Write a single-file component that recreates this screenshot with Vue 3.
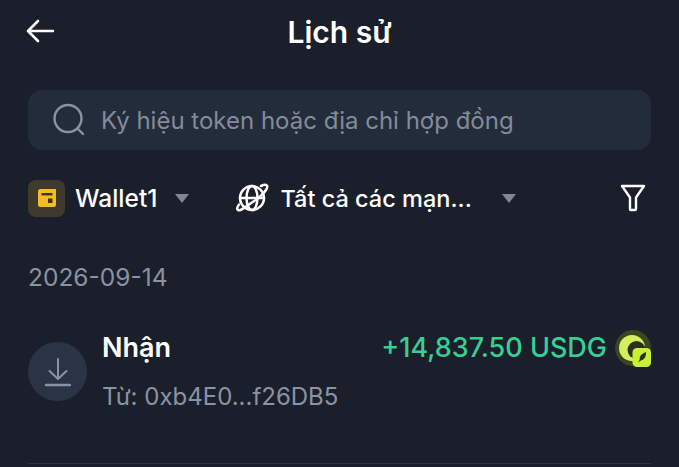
<script setup>
const title = 'Lịch sử'
</script>

<template>
  <div class="page">
    <header class="header">
      <svg class="back" width="30" height="24" viewBox="0 0 30 24" fill="none" stroke="#fff" stroke-width="2.6" stroke-linecap="round" stroke-linejoin="round">
        <path d="M2 12H27M12 2 2 12 12 22" />
      </svg>
      <h1 class="title">{{ title }}</h1>
    </header>

    <div class="search">
      <svg width="34" height="34" viewBox="0 0 34 34" fill="none" stroke="#8b93a3" stroke-width="2.4" stroke-linecap="round">
        <circle cx="16" cy="15.5" r="13.5" />
        <path d="M25.5 25.5 31 31" />
      </svg>
      <span class="placeholder">Ký hiệu token hoặc địa chỉ hợp đồng</span>
    </div>

    <div class="filters">
      <div class="wallet-badge">
        <svg width="20" height="20" viewBox="0 0 20 20">
          <path d="M3.500 1H19v15.500a2.500 2.500 0 0 1-2.500 2.500H3.500A2.500 2.500 0 0 1 1 16.500v-13A2.500 2.500 0 0 1 3.500 1Z" fill="#f5bd24" />
          <rect x="4.500" y="5" width="11" height="2.400" fill="#3f3521" />
          <rect x="11" y="10.500" width="4.500" height="4.500" fill="#3f3521" />
        </svg>
      </div>
      <span class="filter-label wallet-name">Wallet1</span>
      <span class="caret"></span>
      <svg class="globe" width="34" height="34" viewBox="0 0 34 34" fill="none" stroke="#fff" stroke-width="2.500" stroke-linecap="round" stroke-linejoin="round">
        <circle cx="17" cy="17" r="12" />
        <ellipse cx="17" cy="17" rx="5.500" ry="12" />
        <path d="M5 17h24" />
        <path d="M26 5c3-1.400 5.400-1.500 6-.3 1.500 2.800-4.500 9.800-13.500 15.800S4.400 31 2.600 28.800c-.9-1.100-.3-3 1.400-5.300" />
      </svg>
      <span class="filter-label network">Tất cả các mạn...</span>
      <span class="caret"></span>
      <svg class="funnel" width="26" height="28" viewBox="0 0 26 28" fill="none" stroke="#fff" stroke-width="2.400" stroke-linejoin="round">
        <path d="M2 2h22l-8 11.500V25a1 1 0 0 1-1 1h-4a1 1 0 0 1-1-1V13.500Z" />
      </svg>
    </div>

    <div class="date">2026-09-14</div>

    <div class="tx">
      <div class="tx-icon">
        <svg width="26" height="30" viewBox="0 0 26 30" fill="none" stroke="#8b93a3" stroke-width="2" stroke-linecap="round" stroke-linejoin="round">
          <path d="M13 2v20M4.500 14 13 22l8.500-8" />
          <path d="M1 28h24" stroke-width="2.400" />
        </svg>
      </div>
      <div class="tx-main">
        <div class="tx-title">Nhận</div>
        <div class="tx-from">Từ: 0xb4E0...f26DB5</div>
      </div>
      <div class="tx-amount">
        <span>+14,837.50 USDG</span>
        <span class="coin">
          <svg width="36" height="37" viewBox="0 0 36 37">
            <circle cx="18" cy="18" r="18" fill="#3b451f" />
            <circle cx="17" cy="18" r="13" fill="#d5ef5c" />
            <circle cx="21.500" cy="20" r="9" fill="#2a2f20" />
            <rect x="17.500" y="18" width="18.500" height="19" rx="4.500" fill="#c8f22f" />
            <path d="M23 32.500l1.800-3c-.6-3 1.800-6 6.200-7.500.4 4-1.400 7.500-4.800 8.300l-3.200 2.200Z" fill="#283016" />
          </svg>
        </span>
      </div>
    </div>
    <div class="divider"></div>
  </div>
</template>

<style scoped>
.page {
  box-sizing: border-box;
  width: 679px;
  height: 467px;
  overflow: hidden;
  padding: 0 28px;
  background: #1a1f2b;
  color: #fff;
  font-family: Inter, "Noto Sans", sans-serif;
}
.header {
  position: relative;
  display: flex;
  align-items: center;
  justify-content: center;
  height: 64px;
}
.back {
  position: absolute;
  left: -2px;
  top: 19px;
}
.title {
  margin: 0;
  font-size: 30px;
  font-weight: 600;
  line-height: 36px;
}
.search {
  display: flex;
  align-items: center;
  gap: 15px;
  height: 60px;
  margin-top: 26px;
  padding-left: 24px;
  border-radius: 14px;
  background: #232c3a;
}
.placeholder {
  font-size: 24px;
  color: #838b9b;
}
.filters {
  display: flex;
  align-items: center;
  height: 38px;
  margin-top: 29px;
}
.wallet-badge {
  display: flex;
  align-items: center;
  justify-content: center;
  width: 37px;
  height: 37px;
  border-radius: 8px;
  background: #403a2d;
}
.filter-label {
  font-weight: 500;
  color: #fff;
}
.wallet-name {
  margin-left: 10px;
  font-size: 24.500px;
}
.caret {
  width: 0;
  height: 0;
  margin-left: 18px;
  border-left: 7px solid transparent;
  border-right: 7px solid transparent;
  border-top: 9px solid #7f8696;
}
.globe {
  margin-left: 46px;
}
.network {
  margin-left: 11px;
  font-size: 23.500px;
}
.network + .caret {
  margin-left: 30px;
}
.funnel {
  margin-left: auto;
  margin-right: 5px;
}
.date {
  margin-top: 42px;
  font-size: 24.500px;
  line-height: 36px;
  color: #8b93a3;
}
.tx {
  display: flex;
  align-items: flex-start;
  margin-top: 35px;
}
.tx-icon {
  display: flex;
  align-items: center;
  justify-content: center;
  flex: none;
  width: 59px;
  height: 59px;
  margin-top: 12px;
  border-radius: 50%;
  background: #2a3444;
}
.tx-main {
  margin-left: 15px;
}
.tx-title {
  font-size: 27px;
  font-weight: 600;
  line-height: 36px;
}
.tx-from {
  margin-top: 16px;
  font-size: 24px;
  line-height: 30px;
  color: #8b93a3;
}
.tx-amount {
  display: flex;
  align-items: center;
  gap: 8px;
  margin-left: auto;
  font-size: 27px;
  font-weight: 500;
  line-height: 36px;
  color: #37cf93;
}
.coin {
  display: flex;
  height: 36px;
}
.divider {
  height: 1px;
  margin-top: 51px;
  background: #2c3543;
}
</style>
